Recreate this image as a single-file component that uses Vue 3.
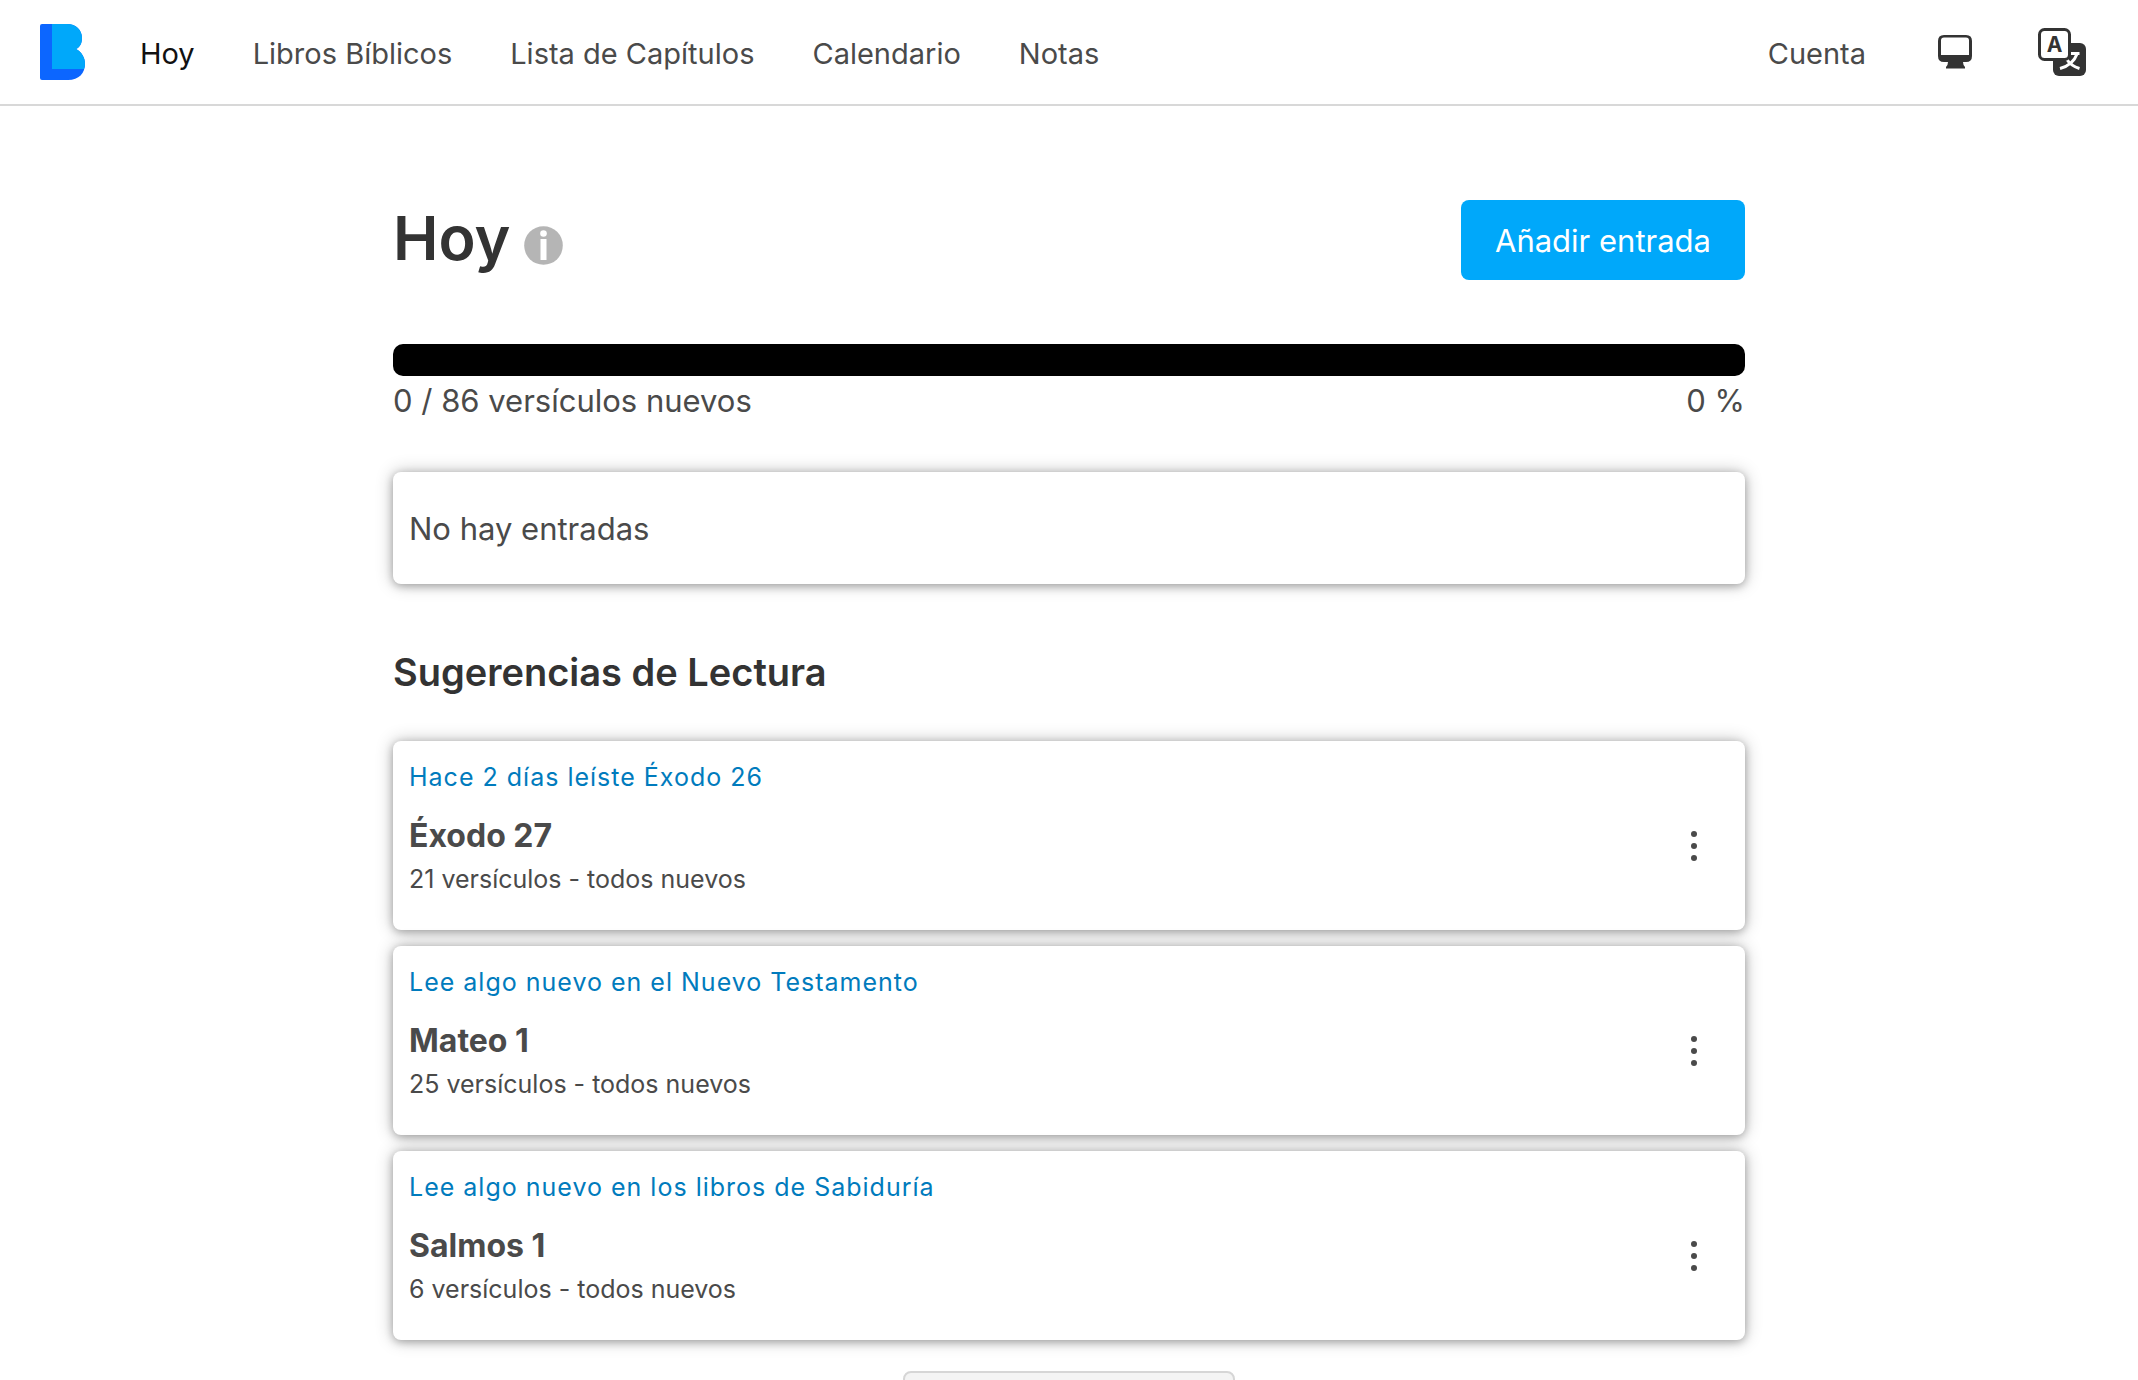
<template>
  <div class="page">
    <header class="top-bar">
      <nav class="nav">
        <a class="logo" href="#" aria-label="Inicio">
          <svg viewBox="0 0 46 56" width="46" height="56">
            <path fill="#0c66ff" d="M2 0H27C36 0 42 6 42 14C42 19 40 23 36 25C42 28 45 34 45 40C45 49 39 56 28 56H2Q0 56 0 54V2Q0 0 2 0Z" />
            <path fill="#00a8fa" d="M12 0H27C36 0 42 6 42 14C42 19 40 23 36 25C42 28 45 34 45 40C45 42 44 44 44 45H12Z" />
          </svg>
        </a>
        <div class="nav-links">
          <a
            v-for="link in links"
            :key="link"
            href="#"
            class="nav-link"
            :class="{ active: link === currentLink }"
          >{{ link }}</a>
        </div>
      </nav>
      <div class="tools">
        <a href="#" class="nav-link">Cuenta</a>
        <div class="tool-icons">
          <button class="icon-button" type="button" aria-label="Tema">
            <svg viewBox="0 0 34 34" width="34" height="34">
              <path fill="#333" fill-rule="evenodd" d="M6 0H28Q34 0 34 6V21Q34 27 28 27H25Q25 30 27 32V33.500H8V32Q10 30 10 27H6Q0 27 0 21V6Q0 0 6 0ZM6 2.500Q3 2.500 3 5.500V20H31V5.500Q31 2.500 28 2.500Z" />
            </svg>
          </button>
          <button class="icon-button" type="button" aria-label="Idioma">
            <svg viewBox="0 0 48 48" width="48" height="48">
              <rect x="15" y="15" width="33" height="33" rx="6" fill="#333" />
              <path d="M33 25.500H41.500M39 26Q35 37 22 40.500M28.500 31Q33 38 41.500 40.500" fill="none" stroke="#fff" stroke-width="3" />
              <rect x="1.500" y="1.500" width="30" height="30" rx="5" fill="#fff" stroke="#333" stroke-width="3" />
              <text x="16.500" y="24" text-anchor="middle" class="icon-letter">A</text>
            </svg>
          </button>
        </div>
      </div>
    </header>

    <main class="content">
      <div class="title-row">
        <h1>
          Hoy
          <button class="icon-button" type="button" aria-label="Información">
            <svg viewBox="0 0 39 39" width="39" height="39">
              <circle cx="19.500" cy="19.500" r="19.300" fill="#b5b5b5" />
              <circle cx="19.500" cy="7.500" r="3.300" fill="#fff" />
              <rect x="16.500" y="13" width="6" height="21" fill="#fff" />
            </svg>
          </button>
        </h1>
        <button class="primary-button" type="button">Añadir entrada</button>
      </div>

      <section class="progress">
        <div class="progress-track">
          <div class="progress-fill" :style="{ width: percent + '%' }"></div>
        </div>
        <div class="progress-labels">
          <span>{{ newVerses }} / {{ goal }} versículos nuevos</span>
          <span>{{ percent }} %</span>
        </div>
      </section>

      <div class="card empty">No hay entradas</div>

      <h2>Sugerencias de Lectura</h2>
      <div class="suggestions">
        <article v-for="item in suggestions" :key="item.passage" class="card suggestion">
          <div class="context">{{ item.context }}</div>
          <div class="suggestion-body">
            <div>
              <h3>{{ item.passage }}</h3>
              <div class="verses">{{ item.verses }} versículos - todos nuevos</div>
            </div>
            <button class="icon-button menu" type="button" aria-label="Opciones">
              <svg viewBox="0 0 6 30" width="6" height="30" fill="#4a4a4a">
                <circle cx="3" cy="3" r="3" />
                <circle cx="3" cy="15" r="3" />
                <circle cx="3" cy="27" r="3" />
              </svg>
            </button>
          </div>
        </article>
      </div>

      <button class="secondary-button" type="button" aria-label="Ver más"></button>
    </main>
  </div>
</template>

<script setup>
import { computed, ref } from 'vue';

const links = ['Hoy', 'Libros Bíblicos', 'Lista de Capítulos', 'Calendario', 'Notas'];
const currentLink = ref('Hoy');

const newVerses = ref(0);
const goal = ref(86);
const percent = computed(() => Math.floor((newVerses.value / goal.value) * 100));

const suggestions = [
  { context: 'Hace 2 días leíste Éxodo 26', passage: 'Éxodo 27', verses: 21 },
  { context: 'Lee algo nuevo en el Nuevo Testamento', passage: 'Mateo 1', verses: 25 },
  { context: 'Lee algo nuevo en los libros de Sabiduría', passage: 'Salmos 1', verses: 6 }
];
</script>

<style>
body {
  background-color: #fff;
}
</style>

<style scoped>
.page {
  height: 100vh;
  overflow: hidden;
  font-family: Inter, "Liberation Sans", sans-serif;
  font-size: 31px;
  line-height: 50px;
  color: #4a4a4a;
}

button {
  font: inherit;
  cursor: pointer;
}

svg {
  display: block;
}

.top-bar {
  display: flex;
  justify-content: space-between;
  align-items: center;
  height: 104px;
  padding: 0 52px 0 40px;
  border-bottom: 2px solid #d8d8d8;
}

.nav,
.nav-links,
.tools,
.tool-icons {
  display: flex;
  align-items: center;
}

.nav {
  gap: 54px;
}

.nav-links {
  gap: 58px;
}

.tools {
  gap: 72px;
}

.tool-icons {
  gap: 66px;
}

.nav-link {
  padding-top: 4px;
  font-size: 29px;
  color: #4a4a4a;
  text-decoration: none;
}

.nav-link.active {
  color: #111;
}

.icon-button {
  padding: 0;
  border: none;
  background: none;
}

.icon-letter {
  font-size: 21px;
  font-weight: 700;
  fill: #333;
}

.content {
  display: flex;
  flex-direction: column;
  max-width: 1352px;
  margin: 0 auto;
  padding: 94px 24px 0;
}

.title-row {
  display: flex;
  justify-content: space-between;
  align-items: center;
  margin-bottom: 64px;
}

h1 {
  display: flex;
  align-items: center;
  gap: 14px;
  margin: 0;
  padding-bottom: 4px;
  font-size: 61px;
  font-weight: 600;
  line-height: 76px;
  color: #333;
}

h1 .icon-button {
  padding-top: 14px;
}

.primary-button {
  padding: 16px 34px 14px;
  border: none;
  border-radius: 8px;
  background-color: #00a8fa;
  color: #fff;
}

.progress-track {
  height: 32px;
  border-radius: 10px;
  background-color: #000;
  overflow: hidden;
}

.progress-fill {
  height: 100%;
  background-color: #00a8fa;
}

.progress-labels {
  display: flex;
  justify-content: space-between;
}

.card {
  border-radius: 8px;
  background-color: #fff;
  box-shadow: 0 2px 8px rgba(0, 0, 0, 0.28), 0 0 18px rgba(0, 0, 0, 0.24);
}

.empty {
  margin-top: 46px;
  padding: 32px 16px 30px;
}

h2 {
  margin: 64px 0 45px;
  font-size: 38px;
  font-weight: 600;
  line-height: 48px;
  color: #333;
}

.suggestions {
  display: flex;
  flex-direction: column;
  gap: 16px;
}

.suggestion {
  padding: 16px 16px 30px;
}

.context {
  margin-bottom: 16px;
  font-size: 25px;
  line-height: 40px;
  letter-spacing: 1px;
  color: #007bbd;
}

.suggestion-body {
  display: flex;
  justify-content: space-between;
  align-items: center;
}

h3 {
  margin: 0;
  font-size: 32px;
  font-weight: 700;
  line-height: 45px;
}

.verses {
  font-size: 25px;
  line-height: 42px;
}

.menu {
  padding: 0 32px 22px;
}

.secondary-button {
  align-self: center;
  width: 332px;
  height: 80px;
  margin-top: 31px;
  border: 2px solid #d6d6d6;
  border-radius: 8px;
  background-color: #f4f4f4;
}
</style>
